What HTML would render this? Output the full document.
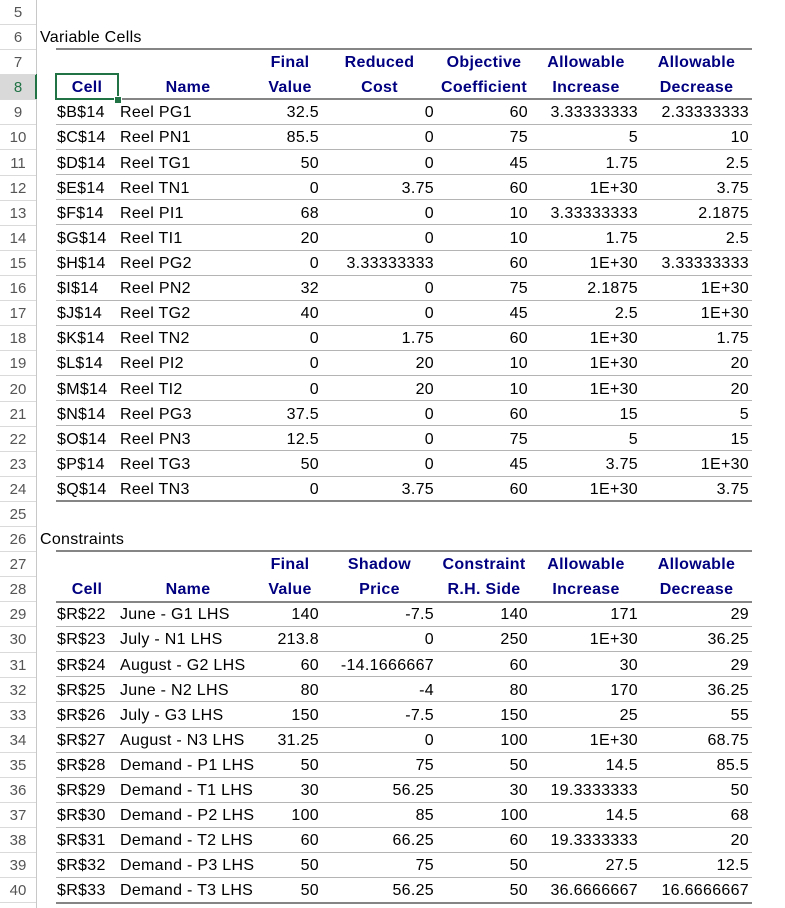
<!DOCTYPE html>
<html><head><meta charset="utf-8"><style>
body{margin:0;width:785px;height:908px;background:#fff;position:relative;overflow:hidden;font-family:"Liberation Sans",Arial,sans-serif;font-size:16px;letter-spacing:0.3px;color:#000}
.r{position:absolute;left:0;width:785px;height:25px;line-height:27px}
.r span{position:absolute;top:0;height:25px;white-space:nowrap}
.h{left:0;width:36px;text-align:center;color:#555;letter-spacing:0;font-size:15px}
.c1{left:57px;width:60px}
.c2{left:120px;width:137px}
.c3{left:258px;width:61px;text-align:right}
.c4{left:322px;width:112px;text-align:right}
.c5{left:437px;width:91px;text-align:right}
.c6{left:531px;width:107px;text-align:right}
.c7{left:641px;width:108px;text-align:right}
.hd span.x{font-weight:bold;color:#000080}
.hd .c1{left:56px;width:62px;text-align:center}
.hd .c2{left:118px;width:140px;text-align:center}
.hd .c3{left:258px;width:64px;text-align:center}
.hd .c4{left:322px;width:115px;text-align:center}
.hd .c5{left:437px;width:94px;text-align:center}
.hd .c6{left:531px;width:110px;text-align:center}
.hd .c7{left:641px;width:111px;text-align:center}
.ln{position:absolute;left:56px;width:696px;height:1px;background:#b4b4b4}
.tk{position:absolute;left:56px;width:696px;height:2px;background:#858585}
.hl{position:absolute;left:0;width:36px;height:1px;background:#dadada}
</style></head><body>
<div style="position:absolute;left:36px;top:0;width:1px;height:908px;background:#c8c8c8"></div>
<div style="position:absolute;left:0;top:74px;width:36px;height:25px;background:#d9d9d9"></div>
<div style="position:absolute;left:35px;top:74px;width:2px;height:25px;background:#217346"></div>
<div class="hl" style="top:24px"></div><div class="hl" style="top:49px"></div><div class="hl" style="top:74px"></div><div class="hl" style="top:99px"></div><div class="hl" style="top:124px"></div><div class="hl" style="top:149px"></div><div class="hl" style="top:175px"></div><div class="hl" style="top:200px"></div><div class="hl" style="top:225px"></div><div class="hl" style="top:250px"></div><div class="hl" style="top:275px"></div><div class="hl" style="top:300px"></div><div class="hl" style="top:325px"></div><div class="hl" style="top:350px"></div><div class="hl" style="top:375px"></div><div class="hl" style="top:401px"></div><div class="hl" style="top:426px"></div><div class="hl" style="top:451px"></div><div class="hl" style="top:476px"></div><div class="hl" style="top:501px"></div><div class="hl" style="top:526px"></div><div class="hl" style="top:551px"></div><div class="hl" style="top:576px"></div><div class="hl" style="top:601px"></div><div class="hl" style="top:626px"></div><div class="hl" style="top:652px"></div><div class="hl" style="top:677px"></div><div class="hl" style="top:702px"></div><div class="hl" style="top:727px"></div><div class="hl" style="top:752px"></div><div class="hl" style="top:777px"></div><div class="hl" style="top:802px"></div><div class="hl" style="top:827px"></div><div class="hl" style="top:852px"></div><div class="hl" style="top:877px"></div><div class="hl" style="top:902px"></div>

<div class="tk" style="top:48px"></div>
<div class="tk" style="top:98px"></div>
<div class="ln" style="top:124px"></div><div class="ln" style="top:149px"></div><div class="ln" style="top:174px"></div><div class="ln" style="top:199px"></div><div class="ln" style="top:224px"></div><div class="ln" style="top:250px"></div><div class="ln" style="top:275px"></div><div class="ln" style="top:300px"></div><div class="ln" style="top:325px"></div><div class="ln" style="top:350px"></div><div class="ln" style="top:375px"></div><div class="ln" style="top:400px"></div><div class="ln" style="top:425px"></div><div class="ln" style="top:450px"></div><div class="ln" style="top:476px"></div>
<div class="tk" style="top:500px"></div>
<div class="tk" style="top:550px"></div>
<div class="tk" style="top:601px"></div>
<div class="ln" style="top:626px"></div><div class="ln" style="top:651px"></div><div class="ln" style="top:676px"></div><div class="ln" style="top:701px"></div><div class="ln" style="top:727px"></div><div class="ln" style="top:752px"></div><div class="ln" style="top:777px"></div><div class="ln" style="top:802px"></div><div class="ln" style="top:827px"></div><div class="ln" style="top:852px"></div><div class="ln" style="top:877px"></div>
<div class="tk" style="top:902px"></div>

<div style="position:absolute;left:55px;top:73px;width:60px;height:23px;border:2px solid #217346"></div>
<div style="position:absolute;left:114px;top:96px;width:6px;height:6px;background:#217346;border:1px solid #fff"></div>

<div class="r" style="top:-1px"><span class="h">5</span></div>
<div class="r" style="top:24px"><span class="h">6</span><span style="left:40px">Variable Cells</span></div>
<div class="r hd" style="top:49px"><span class="h">7</span><span class="c3 x">Final</span><span class="c4 x">Reduced</span><span class="c5 x">Objective</span><span class="c6 x">Allowable</span><span class="c7 x">Allowable</span></div>
<div class="r hd" style="top:74px"><span class="h" style="color:#217346">8</span><span class="c1 x">Cell</span><span class="c2 x">Name</span><span class="c3 x">Value</span><span class="c4 x">Cost</span><span class="c5 x">Coefficient</span><span class="c6 x">Increase</span><span class="c7 x">Decrease</span></div>
<div class="r" style="top:99px"><span class="h">9</span><span class="c1">$B$14</span><span class="c2">Reel PG1</span><span class="c3">32.5</span><span class="c4">0</span><span class="c5">60</span><span class="c6">3.33333333</span><span class="c7">2.33333333</span></div>
<div class="r" style="top:124px"><span class="h">10</span><span class="c1">$C$14</span><span class="c2">Reel PN1</span><span class="c3">85.5</span><span class="c4">0</span><span class="c5">75</span><span class="c6">5</span><span class="c7">10</span></div>
<div class="r" style="top:150px"><span class="h">11</span><span class="c1">$D$14</span><span class="c2">Reel TG1</span><span class="c3">50</span><span class="c4">0</span><span class="c5">45</span><span class="c6">1.75</span><span class="c7">2.5</span></div>
<div class="r" style="top:175px"><span class="h">12</span><span class="c1">$E$14</span><span class="c2">Reel TN1</span><span class="c3">0</span><span class="c4">3.75</span><span class="c5">60</span><span class="c6">1E+30</span><span class="c7">3.75</span></div>
<div class="r" style="top:200px"><span class="h">13</span><span class="c1">$F$14</span><span class="c2">Reel PI1</span><span class="c3">68</span><span class="c4">0</span><span class="c5">10</span><span class="c6">3.33333333</span><span class="c7">2.1875</span></div>
<div class="r" style="top:225px"><span class="h">14</span><span class="c1">$G$14</span><span class="c2">Reel TI1</span><span class="c3">20</span><span class="c4">0</span><span class="c5">10</span><span class="c6">1.75</span><span class="c7">2.5</span></div>
<div class="r" style="top:250px"><span class="h">15</span><span class="c1">$H$14</span><span class="c2">Reel PG2</span><span class="c3">0</span><span class="c4">3.33333333</span><span class="c5">60</span><span class="c6">1E+30</span><span class="c7">3.33333333</span></div>
<div class="r" style="top:275px"><span class="h">16</span><span class="c1">$I$14</span><span class="c2">Reel PN2</span><span class="c3">32</span><span class="c4">0</span><span class="c5">75</span><span class="c6">2.1875</span><span class="c7">1E+30</span></div>
<div class="r" style="top:300px"><span class="h">17</span><span class="c1">$J$14</span><span class="c2">Reel TG2</span><span class="c3">40</span><span class="c4">0</span><span class="c5">45</span><span class="c6">2.5</span><span class="c7">1E+30</span></div>
<div class="r" style="top:325px"><span class="h">18</span><span class="c1">$K$14</span><span class="c2">Reel TN2</span><span class="c3">0</span><span class="c4">1.75</span><span class="c5">60</span><span class="c6">1E+30</span><span class="c7">1.75</span></div>
<div class="r" style="top:350px"><span class="h">19</span><span class="c1">$L$14</span><span class="c2">Reel PI2</span><span class="c3">0</span><span class="c4">20</span><span class="c5">10</span><span class="c6">1E+30</span><span class="c7">20</span></div>
<div class="r" style="top:376px"><span class="h">20</span><span class="c1">$M$14</span><span class="c2">Reel TI2</span><span class="c3">0</span><span class="c4">20</span><span class="c5">10</span><span class="c6">1E+30</span><span class="c7">20</span></div>
<div class="r" style="top:401px"><span class="h">21</span><span class="c1">$N$14</span><span class="c2">Reel PG3</span><span class="c3">37.5</span><span class="c4">0</span><span class="c5">60</span><span class="c6">15</span><span class="c7">5</span></div>
<div class="r" style="top:426px"><span class="h">22</span><span class="c1">$O$14</span><span class="c2">Reel PN3</span><span class="c3">12.5</span><span class="c4">0</span><span class="c5">75</span><span class="c6">5</span><span class="c7">15</span></div>
<div class="r" style="top:451px"><span class="h">23</span><span class="c1">$P$14</span><span class="c2">Reel TG3</span><span class="c3">50</span><span class="c4">0</span><span class="c5">45</span><span class="c6">3.75</span><span class="c7">1E+30</span></div>
<div class="r" style="top:476px"><span class="h">24</span><span class="c1">$Q$14</span><span class="c2">Reel TN3</span><span class="c3">0</span><span class="c4">3.75</span><span class="c5">60</span><span class="c6">1E+30</span><span class="c7">3.75</span></div>
<div class="r" style="top:501px"><span class="h">25</span></div>
<div class="r" style="top:526px"><span class="h">26</span><span style="left:40px">Constraints</span></div>
<div class="r hd" style="top:551px"><span class="h">27</span><span class="c3 x">Final</span><span class="c4 x">Shadow</span><span class="c5 x">Constraint</span><span class="c6 x">Allowable</span><span class="c7 x">Allowable</span></div>
<div class="r hd" style="top:576px"><span class="h">28</span><span class="c1 x">Cell</span><span class="c2 x">Name</span><span class="c3 x">Value</span><span class="c4 x">Price</span><span class="c5 x">R.H. Side</span><span class="c6 x">Increase</span><span class="c7 x">Decrease</span></div>
<div class="r" style="top:601px"><span class="h">29</span><span class="c1">$R$22</span><span class="c2">June - G1 LHS</span><span class="c3">140</span><span class="c4">-7.5</span><span class="c5">140</span><span class="c6">171</span><span class="c7">29</span></div>
<div class="r" style="top:626px"><span class="h">30</span><span class="c1">$R$23</span><span class="c2">July - N1 LHS</span><span class="c3">213.8</span><span class="c4">0</span><span class="c5">250</span><span class="c6">1E+30</span><span class="c7">36.25</span></div>
<div class="r" style="top:652px"><span class="h">31</span><span class="c1">$R$24</span><span class="c2">August - G2 LHS</span><span class="c3">60</span><span class="c4">-14.1666667</span><span class="c5">60</span><span class="c6">30</span><span class="c7">29</span></div>
<div class="r" style="top:677px"><span class="h">32</span><span class="c1">$R$25</span><span class="c2">June - N2 LHS</span><span class="c3">80</span><span class="c4">-4</span><span class="c5">80</span><span class="c6">170</span><span class="c7">36.25</span></div>
<div class="r" style="top:702px"><span class="h">33</span><span class="c1">$R$26</span><span class="c2">July - G3 LHS</span><span class="c3">150</span><span class="c4">-7.5</span><span class="c5">150</span><span class="c6">25</span><span class="c7">55</span></div>
<div class="r" style="top:727px"><span class="h">34</span><span class="c1">$R$27</span><span class="c2">August - N3 LHS</span><span class="c3">31.25</span><span class="c4">0</span><span class="c5">100</span><span class="c6">1E+30</span><span class="c7">68.75</span></div>
<div class="r" style="top:752px"><span class="h">35</span><span class="c1">$R$28</span><span class="c2">Demand - P1 LHS</span><span class="c3">50</span><span class="c4">75</span><span class="c5">50</span><span class="c6">14.5</span><span class="c7">85.5</span></div>
<div class="r" style="top:777px"><span class="h">36</span><span class="c1">$R$29</span><span class="c2">Demand - T1 LHS</span><span class="c3">30</span><span class="c4">56.25</span><span class="c5">30</span><span class="c6">19.3333333</span><span class="c7">50</span></div>
<div class="r" style="top:802px"><span class="h">37</span><span class="c1">$R$30</span><span class="c2">Demand - P2 LHS</span><span class="c3">100</span><span class="c4">85</span><span class="c5">100</span><span class="c6">14.5</span><span class="c7">68</span></div>
<div class="r" style="top:827px"><span class="h">38</span><span class="c1">$R$31</span><span class="c2">Demand - T2 LHS</span><span class="c3">60</span><span class="c4">66.25</span><span class="c5">60</span><span class="c6">19.3333333</span><span class="c7">20</span></div>
<div class="r" style="top:852px"><span class="h">39</span><span class="c1">$R$32</span><span class="c2">Demand - P3 LHS</span><span class="c3">50</span><span class="c4">75</span><span class="c5">50</span><span class="c6">27.5</span><span class="c7">12.5</span></div>
<div class="r" style="top:877px"><span class="h">40</span><span class="c1">$R$33</span><span class="c2">Demand - T3 LHS</span><span class="c3">50</span><span class="c4">56.25</span><span class="c5">50</span><span class="c6">36.6666667</span><span class="c7">16.6666667</span></div>
</body></html>
